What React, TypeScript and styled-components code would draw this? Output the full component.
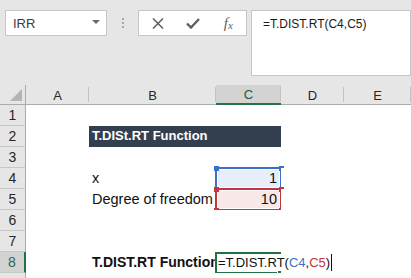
import { FC, ReactNode } from 'react';
import styled, { createGlobalStyle } from 'styled-components';

const GlobalStyle = createGlobalStyle`
  html, body {
    margin: 0;
    padding: 0;
    background: #e6e6e6;
  }

  body {
    font-family: 'Liberation Sans', Arial, sans-serif;
    overflow: hidden;
  }
`;

const COLUMNS = ['A', 'B', 'C', 'D', 'E'];
const ROWS = [1, 2, 3, 4, 5, 6, 7, 8, 9];

type Corner = 'tl' | 'tr' | 'bl' | 'br';

const RangeBox: FC<{ color: string; corners?: Corner[] }> = ({
  color,
  corners = ['tl', 'tr', 'bl', 'br'],
}) => (
  <RefFrame $color={color}>
    {corners.map((c) => (
      <Handle key={c} $color={color} $corner={c} />
    ))}
  </RefFrame>
);

const renderCell = (row: number, col: string): ReactNode => {
  const key = `${col}${row}`;

  if (row === 2 && col === 'B') return <TitleCell key={key}>T.DISt.RT Function</TitleCell>;
  if (row === 2 && col === 'C') return null;

  if (row === 4 && col === 'B') return <Cell key={key}>x</Cell>;
  if (row === 4 && col === 'C')
    return (
      <Cell key={key} $align="right" $fill="#e7eef9">
        1
        <RangeBox color="#3a70c9" />
      </Cell>
    );

  if (row === 5 && col === 'B') return <Cell key={key}>Degree of freedom</Cell>;
  if (row === 5 && col === 'C')
    return (
      <Cell key={key} $align="right" $fill="#f9e8e8">
        10
        <RangeBox color="#c3363d" />
      </Cell>
    );

  if (row === 8 && col === 'B')
    return (
      <Cell key={key} $bold $clip>
        T.DIST.RT Function
      </Cell>
    );
  if (row === 8 && col === 'C')
    return (
      <Cell key={key}>
        <ActiveFrame>
          <FillHandle />
        </ActiveFrame>
        <EditText>
          =T.DIST.RT(<RefText $color="#3a70c9">C4</RefText>,
          <RefText $color="#c3363d">C5</RefText>)
        </EditText>
      </Cell>
    );

  return <Cell key={key} />;
};

export default function App() {
  return (
    <Page>
      <GlobalStyle />
      <FormulaArea>
        <NameBox>
          <span>IRR</span>
          <DropArrow />
        </NameBox>
        <Grip>
          <i />
          <i />
          <i />
        </Grip>
        <ButtonGroup>
          <BarButton>
            <svg width="12" height="11" viewBox="0 0 12 11">
              <path d="M1 0.5 L11 10.5 M11 0.5 L1 10.5" stroke="#5f5f5f" strokeWidth="1.5" fill="none" />
            </svg>
          </BarButton>
          <BarButton>
            <svg width="14" height="11" viewBox="0 0 14 11">
              <path d="M1 5.5 L5 9.5 L13 1" stroke="#5f5f5f" strokeWidth="2.4" fill="none" />
            </svg>
          </BarButton>
          <BarButton>
            <Fx>
              f<sub>x</sub>
            </Fx>
          </BarButton>
        </ButtonGroup>
        <FormulaInput>=T.DIST.RT(C4,C5)</FormulaInput>
      </FormulaArea>

      <Sheet>
        <CornerCell>
          <svg width="12" height="12" viewBox="0 0 12 12">
            <path d="M12 0 L12 12 L0 12 Z" fill="#b4b4b4" />
          </svg>
        </CornerCell>
        {COLUMNS.map((c) => (
          <ColHeader key={c} $active={c === 'C'}>
            {c}
          </ColHeader>
        ))}
        {ROWS.map((r) => [
          <RowHeader key={`h${r}`} $active={r === 8}>
            {r}
          </RowHeader>,
          ...COLUMNS.map((c) => renderCell(r, c)),
        ])}
      </Sheet>
    </Page>
  );
}

const Page = styled.div`
  width: 411px;
  height: 278px;
  overflow: hidden;
  background: #e6e6e6;
`;

const FormulaArea = styled.div`
  display: flex;
  align-items: flex-start;
  height: 85px;
  box-sizing: border-box;
  padding: 10px 0 0 5px;
`;

const NameBox = styled.div`
  display: flex;
  align-items: center;
  justify-content: space-between;
  width: 102px;
  height: 26px;
  box-sizing: border-box;
  padding: 0 6px 0 7px;
  background: #fff;
  border: 1px solid #c6c6c6;
  font-size: 13px;
  color: #3a3a3a;
`;

const DropArrow = styled.span`
  width: 0;
  height: 0;
  margin-top: -2px;
  border-left: 4px solid transparent;
  border-right: 4px solid transparent;
  border-top: 4px solid #6a6a6a;
`;

const Grip = styled.div`
  display: flex;
  flex-direction: column;
  align-items: center;
  gap: 2px;
  width: 31px;
  padding-top: 8px;

  i {
    display: block;
    width: 2px;
    height: 2px;
    background: #a8a8a8;
  }
`;

const ButtonGroup = styled.div`
  display: flex;
  align-items: center;
  width: 109px;
  height: 26px;
  box-sizing: border-box;
  padding-left: 1px;
  background: #fff;
  border: 1px solid #c6c6c6;
`;

const BarButton = styled.div`
  display: flex;
  align-items: center;
  justify-content: center;
  width: 36px;
  height: 100%;
`;

const Fx = styled.span`
  font-family: 'Liberation Serif', 'Times New Roman', serif;
  font-style: italic;
  font-size: 15px;
  color: #5f5f5f;

  sub {
    font-size: 11px;
    vertical-align: -1px;
  }
`;

const FormulaInput = styled.div`
  flex: 1;
  height: 66px;
  margin-left: 4px;
  box-sizing: border-box;
  padding: 5px 0 0 11px;
  background: #fff;
  border: 1px solid #c6c6c6;
  font-size: 12px;
  line-height: 17px;
  color: #1a1a1a;
`;

const Sheet = styled.div`
  display: grid;
  grid-template-columns: 26px 63px 127px 65px 63px 67px;
  grid-template-rows: 20px;
  grid-auto-rows: 21px;
  background: #fff;
`;

const HeaderBase = styled.div`
  display: flex;
  align-items: center;
  justify-content: center;
  box-sizing: border-box;
  background: #e6e6e6;
  font-size: 13px;
  color: #262626;
`;

const CornerCell = styled(HeaderBase)`
  align-items: flex-end;
  justify-content: flex-end;
  padding: 0 3px 3px 0;
  border-right: 1px solid #ababab;
  border-bottom: 1px solid #ababab;
`;

const ColHeader = styled(HeaderBase)<{ $active?: boolean }>`
  position: relative;
  padding-top: 1px;
  background: ${(p) => (p.$active ? '#d3d3d3' : '#e6e6e6')};
  border-bottom: ${(p) => (p.$active ? '2px solid #217346' : '1px solid #ababab')};
  color: ${(p) => (p.$active ? '#1f5a3e' : '#262626')};

  &::after {
    content: '';
    position: absolute;
    right: 0;
    top: 2px;
    bottom: 2px;
    width: 1px;
    background: #c2c2c2;
  }
`;

const RowHeader = styled(HeaderBase)<{ $active?: boolean }>`
  font-size: 14px;
  background: ${(p) => (p.$active ? '#d3d3d3' : '#e6e6e6')};
  border-bottom: 1px solid #c8c8c8;
  border-right: ${(p) => (p.$active ? '2px solid #217346' : '1px solid #ababab')};
  color: ${(p) => (p.$active ? '#2d6a4b' : '#262626')};
`;

const Cell = styled.div<{ $align?: 'left' | 'right'; $bold?: boolean; $fill?: string; $clip?: boolean }>`
  position: relative;
  display: flex;
  align-items: flex-end;
  justify-content: ${(p) => (p.$align === 'right' ? 'flex-end' : 'flex-start')};
  box-sizing: border-box;
  padding: 0 ${(p) => (p.$align === 'right' ? '4px' : '3px')} 2px 3px;
  background: ${(p) => p.$fill ?? '#fff'};
  font-size: ${(p) => (p.$bold ? '14px' : '14.5px')};
  font-weight: ${(p) => (p.$bold ? 700 : 400)};
  line-height: 17px;
  color: #111;
  white-space: nowrap;
  overflow: ${(p) => (p.$clip ? 'hidden' : 'visible')};
`;

const TitleCell = styled(Cell)`
  grid-column: span 2;
  padding-bottom: 3px;
  background: #333f4f;
  color: #fff;
  font-size: 13px;
  font-weight: 700;
`;

const RefFrame = styled.div<{ $color: string }>`
  position: absolute;
  inset: -1px -1px -1px -1px;
  border: 2px solid ${(p) => p.$color};
  box-shadow: inset 0 0 0 1px #fff;
  pointer-events: none;
`;

const Handle = styled.span<{ $color: string; $corner: Corner }>`
  position: absolute;
  width: 5px;
  height: 5px;
  background: ${(p) => p.$color};
  ${(p) => (p.$corner[0] === 't' ? 'top: -3.5px;' : 'bottom: -3.5px;')}
  ${(p) => (p.$corner[1] === 'l' ? 'left: -3.5px;' : 'right: -3.5px;')}
`;

const ActiveFrame = styled.div`
  position: absolute;
  inset: 0 -1px -1px -1px;
  border: 2px solid #217346;
  pointer-events: none;
`;

const FillHandle = styled.span`
  position: absolute;
  right: -4px;
  bottom: -4px;
  width: 5px;
  height: 5px;
  background: #217346;
  border: 1px solid #fff;
`;

const EditText = styled.span`
  position: relative;
  z-index: 2;
  display: flex;
  align-items: flex-end;
  height: 17px;
  padding-right: 1px;
  margin-left: -1px;
  background: #fff;
  font-size: 13px;
  color: #111;
  border-right: 1px solid #111;
`;

const RefText = styled.span<{ $color: string }>`
  color: ${(p) => p.$color};
`;
